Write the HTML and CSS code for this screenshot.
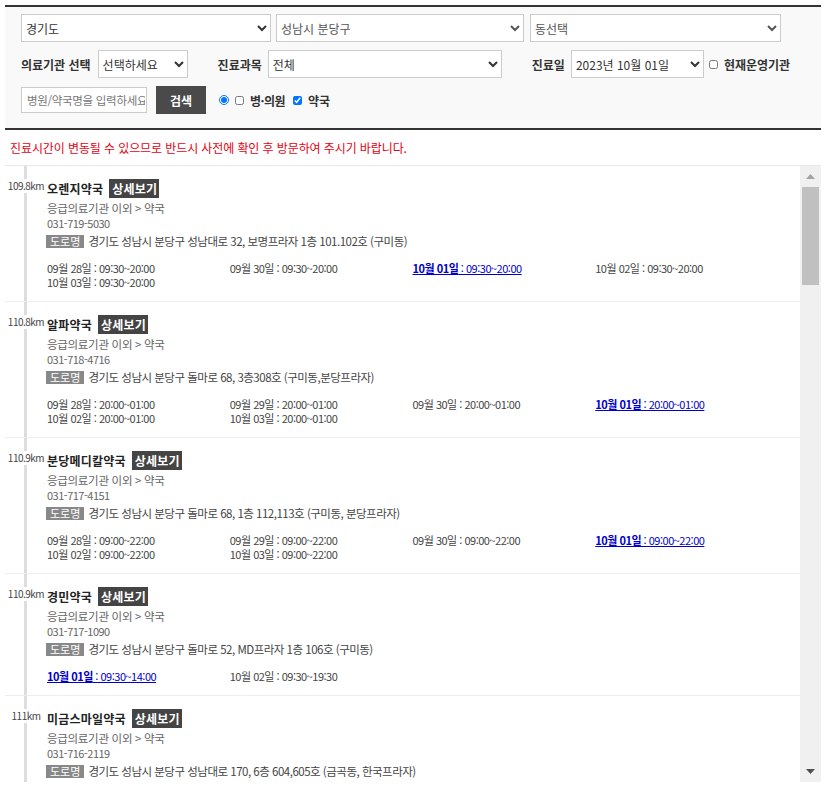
FILE: index.html
```html
<!DOCTYPE html>
<html lang="ko">
<head>
<meta charset="utf-8">
<title>진료기관 찾기</title>
<link rel="stylesheet" href="styles.css">
</head>
<body>
<div class="wrap">
  <form class="search-panel">
    <div class="row">
      <select class="sel sel-sido"><option>경기도</option></select>
      <select class="sel sel-sigungu"><option>성남시 분당구</option></select>
      <select class="sel sel-dong"><option>동선택</option></select>
    </div>
    <div class="row">
      <label class="lbl">의료기관 선택</label>
      <select class="sel sel-type"><option>선택하세요</option></select>
      <label class="lbl lbl-gap">진료과목</label>
      <select class="sel sel-subject"><option>전체</option></select>
      <label class="lbl lbl-gap">진료일</label>
      <select class="sel sel-date"><option>2023년 10월 01일</option></select>
      <label class="chk chk-open"><input type="checkbox">현재운영기관</label>
    </div>
    <div class="row">
      <input class="kw" type="text" placeholder="병원/약국명을 입력하세요">
      <button class="btn-search" type="button">검색</button>
      <input class="radio" type="radio" checked>
      <label class="chk chk-hosp"><input type="checkbox">병·의원</label>
      <label class="chk chk-pharm"><input type="checkbox" checked>약국</label>
    </div>
  </form>

  <p class="notice">진료시간이 변동될 수 있으므로 반드시 사전에 확인 후 방문하여 주시기 바랍니다.</p>

  <div class="results">
    <ul class="list">
      <li class="item">
        <div class="item-side"><span class="dist">109.8km</span></div>
        <div class="item-body">
          <div class="title"><strong class="name">오렌지약국</strong><a class="detail-btn" href="#">상세보기</a></div>
          <div class="category">응급의료기관 이외 &gt; 약국</div>
          <div class="phone">031-719-5030</div>
          <div class="road"><span class="road-tag">도로명</span>경기도 성남시 분당구 성남대로 32, 보명프라자 1층 101.102호 (구미동)</div>
          <div class="schedule">
            <span>09월 28일 : 09:30~20:00</span>
            <span>09월 30일 : 09:30~20:00</span>
            <a class="today" href="#"><b>10월 01일</b> : 09:30~20:00</a>
            <span>10월 02일 : 09:30~20:00</span>
            <span>10월 03일 : 09:30~20:00</span>
          </div>
        </div>
      </li>
      <li class="item">
        <div class="item-side"><span class="dist">110.8km</span></div>
        <div class="item-body">
          <div class="title"><strong class="name">알파약국</strong><a class="detail-btn" href="#">상세보기</a></div>
          <div class="category">응급의료기관 이외 &gt; 약국</div>
          <div class="phone">031-718-4716</div>
          <div class="road"><span class="road-tag">도로명</span>경기도 성남시 분당구 돌마로 68, 3층308호 (구미동,분당프라자)</div>
          <div class="schedule">
            <span>09월 28일 : 20:00~01:00</span>
            <span>09월 29일 : 20:00~01:00</span>
            <span>09월 30일 : 20:00~01:00</span>
            <a class="today" href="#"><b>10월 01일</b> : 20:00~01:00</a>
            <span>10월 02일 : 20:00~01:00</span>
            <span>10월 03일 : 20:00~01:00</span>
          </div>
        </div>
      </li>
      <li class="item">
        <div class="item-side"><span class="dist">110.9km</span></div>
        <div class="item-body">
          <div class="title"><strong class="name">분당메디칼약국</strong><a class="detail-btn" href="#">상세보기</a></div>
          <div class="category">응급의료기관 이외 &gt; 약국</div>
          <div class="phone">031-717-4151</div>
          <div class="road"><span class="road-tag">도로명</span>경기도 성남시 분당구 돌마로 68, 1층 112,113호 (구미동, 분당프라자)</div>
          <div class="schedule">
            <span>09월 28일 : 09:00~22:00</span>
            <span>09월 29일 : 09:00~22:00</span>
            <span>09월 30일 : 09:00~22:00</span>
            <a class="today" href="#"><b>10월 01일</b> : 09:00~22:00</a>
            <span>10월 02일 : 09:00~22:00</span>
            <span>10월 03일 : 09:00~22:00</span>
          </div>
        </div>
      </li>
      <li class="item">
        <div class="item-side"><span class="dist">110.9km</span></div>
        <div class="item-body">
          <div class="title"><strong class="name">경민약국</strong><a class="detail-btn" href="#">상세보기</a></div>
          <div class="category">응급의료기관 이외 &gt; 약국</div>
          <div class="phone">031-717-1090</div>
          <div class="road"><span class="road-tag">도로명</span>경기도 성남시 분당구 돌마로 52, MD프라자 1층 106호 (구미동)</div>
          <div class="schedule">
            <a class="today" href="#"><b>10월 01일</b> : 09:30~14:00</a>
            <span>10월 02일 : 09:30~19:30</span>
          </div>
        </div>
      </li>
      <li class="item">
        <div class="item-side"><span class="dist">111km</span></div>
        <div class="item-body">
          <div class="title"><strong class="name">미금스마일약국</strong><a class="detail-btn" href="#">상세보기</a></div>
          <div class="category">응급의료기관 이외 &gt; 약국</div>
          <div class="phone">031-716-2119</div>
          <div class="road"><span class="road-tag">도로명</span>경기도 성남시 분당구 성남대로 170, 6층 604,605호 (금곡동, 한국프라자)</div>
        </div>
      </li>
    </ul>
    <div class="scrollbar" aria-hidden="true">
      <span class="sb-btn">
        <svg width="9" height="5" viewBox="0 0 9 5"><path d="M4.5 0L9 5H0z" fill="#a3a3a3"/></svg>
      </span>
      <span class="sb-track"><span class="sb-thumb"></span></span>
      <span class="sb-btn">
        <svg width="9" height="5" viewBox="0 0 9 5"><path d="M0 0H9L4.5 5z" fill="#505050"/></svg>
      </span>
    </div>
  </div>
</div>
</body>
</html>
```

FILE: styles.css
```css
body {
  margin: 0;
  background: #fff;
  color: #333;
  font-family: "Noto Sans CJK KR", "Noto Sans", sans-serif;
}

.wrap {
  width: 816px;
  margin: 5px 0 0 5px;
}

/* ---------- search panel ---------- */
.search-panel {
  margin: 0;
  padding: 7px 16px 14px;
  background: #f9f9f9;
  border-top: 2px solid #333;
  border-bottom: 2px solid #333;
}

.row {
  display: flex;
  align-items: center;
  height: 28px;
}

.row + .row {
  margin-top: 8px;
}

.sel {
  height: 28px;
  margin: 0;
  padding: 0;
  border: 1px solid #ccc;
  border-radius: 0;
  background-color: #fff;
  color: #333;
  font-family: inherit;
  font-size: 12px;
}

.sel-sido { width: 250px; }
.sel-sigungu { width: 248px; margin-left: 5px; color: #555; }
.sel-dong { width: 251px; margin-left: 6px; color: #555; }
.sel-type { width: 90px; margin-left: 7px; }
.sel-subject { width: 234px; margin-left: 6px; }
.sel-date { width: 133px; margin-left: 6px; }

.lbl {
  font-size: 12px;
  font-weight: bold;
  color: #333;
}

.lbl-gap {
  margin-left: 30px;
}

.chk {
  display: inline-flex;
  align-items: center;
  font-size: 12px;
  font-weight: bold;
  color: #333;
}

.chk input {
  width: 9px;
  height: 9px;
  margin: 0 6px 0 0;
}

.chk-open { margin-left: 5px; }
.chk-hosp { margin-left: 6px; letter-spacing: -0.5px; }
.chk-pharm { margin-left: 8px; }

.kw {
  box-sizing: border-box;
  width: 126px;
  height: 26px;
  margin: 0;
  padding: 0 1px 0 5px;
  border: 1px solid #ccc;
  background: #fff;
  font-family: inherit;
  font-size: 11.5px;
  letter-spacing: -0.3px;
  color: #333;
}

.kw::placeholder {
  color: #777;
}

.btn-search {
  width: 50px;
  height: 28px;
  margin: 0 0 0 9px;
  padding: 0;
  border: 0;
  background: #4a4a4a;
  color: #fff;
  font-family: inherit;
  font-size: 12px;
  font-weight: bold;
}

.radio {
  width: 10px;
  height: 10px;
  margin: 0 0 0 13px;
}

/* ---------- notice ---------- */
.notice {
  margin: 0;
  padding: 10px 0 10px 5px;
  font-size: 12px;
  letter-spacing: -0.1px;
  line-height: 15px;
  color: #e60012;
}

/* ---------- result list ---------- */
.results {
  display: flex;
  height: 616px;
  border-top: 1px solid #e8e8e8;
}

.list {
  flex: 1;
  min-width: 0;
  list-style: none;
  margin: 0;
  padding: 0;
  overflow: hidden;
}

.scrollbar {
  display: flex;
  flex-direction: column;
  width: 21px;
  background: #f0f0f0;
}

.sb-btn {
  display: flex;
  align-items: center;
  justify-content: center;
  height: 21px;
}

.sb-track {
  flex: 1;
  padding: 0 2px;
}

.sb-thumb {
  display: block;
  height: 98px;
  background: #c0c0c0;
}

.item {
  display: grid;
  grid-template-columns: 42px 1fr;
  border-bottom: 1px solid #eee;
}

.item-side {
  display: flex;
  justify-content: center;
  align-items: flex-start;
  padding-top: 13px;
  background: linear-gradient(#ddd, #ddd) 19px 0 / 3px 100% no-repeat;
}

.dist {
  display: block;
  background: #fff;
  font-size: 10px;
  letter-spacing: -0.5px;
  line-height: 14px;
  color: #444;
}

.item-body {
  padding: 13px 0 12px;
}

.title {
  display: flex;
  align-items: center;
  height: 19px;
}

.name {
  font-size: 12px;
  letter-spacing: 0.2px;
  line-height: 19px;
  font-weight: bold;
  color: #222;
}

.detail-btn {
  margin-left: 6px;
  padding: 0 2px 0 3px;
  background: #444;
  color: #fff;
  font-size: 12px;
  letter-spacing: 0.2px;
  line-height: 19px;
  font-weight: bold;
  text-decoration: none;
}

.category {
  margin-top: 3px;
  font-size: 11.5px;
  letter-spacing: -0.3px;
  line-height: 15px;
  color: #666;
}

.phone {
  font-size: 11px;
  letter-spacing: -0.5px;
  line-height: 15px;
  color: #666;
}

.road {
  display: flex;
  align-items: center;
  margin-top: 2px;
  height: 16px;
  font-size: 11.5px;
  letter-spacing: -0.5px;
  color: #444;
}

.road-tag {
  margin: 0 4px 0 -1px;
  padding: 0 4px;
  background: #888;
  color: #fff;
  font-size: 11px;
  letter-spacing: 0;
  line-height: 13px;
}

.schedule {
  display: grid;
  grid-template-columns: repeat(4, 182.75px);
  margin-top: 12px;
  font-size: 11px;
  letter-spacing: -0.5px;
  line-height: 14px;
  color: #444;
}

.today {
  color: #0000cc;
  text-decoration: underline;
}
```
